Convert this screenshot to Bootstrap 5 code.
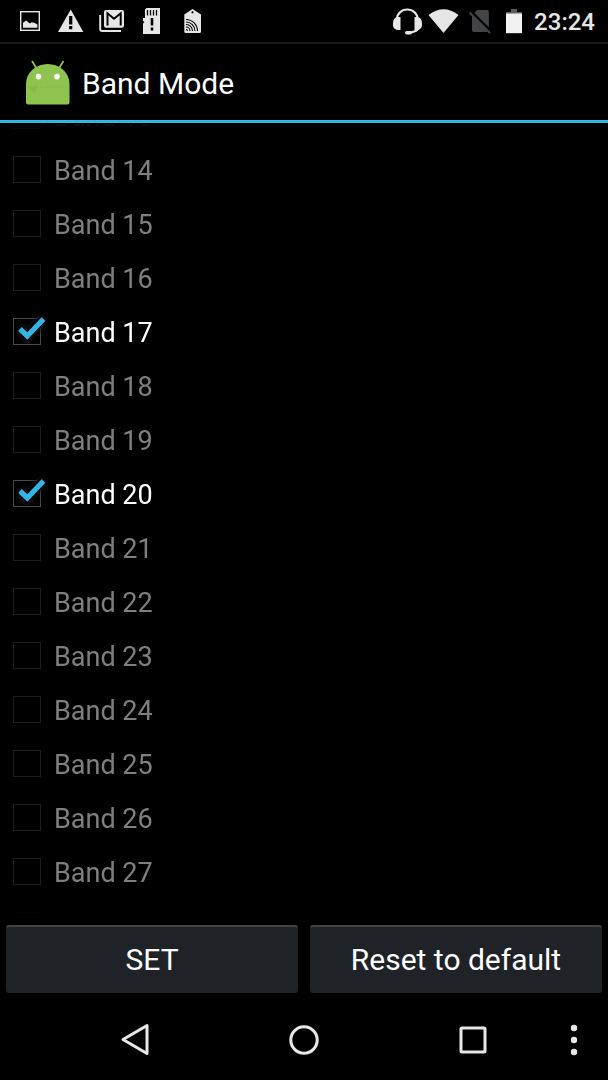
<!DOCTYPE html>
<html lang="en" data-bs-theme="dark">
<head>
<meta charset="utf-8">
<meta name="viewport" content="width=device-width, initial-scale=1">
<title>Band Mode</title>
<link href="https://cdn.jsdelivr.net/npm/bootstrap@5.3.0/dist/css/bootstrap.min.css" rel="stylesheet">
<style>
  body { background: #000; color: #fff; font-family: Roboto, sans-serif; }
  svg { display: block; flex: none; }
  .status-bar { height: 44px; padding: 0 13px 0 14px; border-bottom: 2px solid #191919; color: #e6e6e6; font-size: 24px; font-weight: 500; line-height: 42px; }
  .status-bar span { padding-top: 2px; }
  .status-left { gap: 9px; }
  .title-bar { height: 79px; padding: 0 24px; gap: 10px; border-bottom: 3px solid #33b5e5; }
  .title-bar h1 { font-size: 30px; font-weight: 400; line-height: 40px; padding-top: 4px; }
  .band-window { min-height: 0; -webkit-mask-image: linear-gradient(transparent, #000 20px, #000 calc(100% - 36px), transparent calc(100% - 2px)); mask-image: linear-gradient(transparent, #000 20px, #000 calc(100% - 36px), transparent calc(100% - 2px)); }
  .band-row { height: 54px; padding-left: 8px; flex: none; }
  .band-check { appearance: none; width: 40px; height: 40px; margin: 0; flex: none;
    background: url("data:image/svg+xml,%3Csvg xmlns='http://www.w3.org/2000/svg' viewBox='0 0 40 40'%3E%3Crect x='5.5' y='6.5' width='27' height='26' fill='none' stroke='%231b1e21'/%3E%3C/svg%3E") center / 40px 40px no-repeat; }
  .band-check:checked { background-image: url("data:image/svg+xml,%3Csvg xmlns='http://www.w3.org/2000/svg' viewBox='0 0 40 40'%3E%3Cdefs%3E%3Cfilter id='g' x='-40%25' y='-40%25' width='180%25' height='180%25'%3E%3CfeGaussianBlur stdDeviation='2'/%3E%3C/filter%3E%3C/defs%3E%3Crect x='5.5' y='6.5' width='27' height='26' fill='none' stroke='%23484a4b'/%3E%3Cpath d='M12 17l7 7L35 7' fill='none' stroke='%2315191c' stroke-width='11' filter='url(%23g)'/%3E%3Cpath d='M12 17l7 7L35 7' fill='none' stroke='%23000' stroke-width='8'/%3E%3Cpath d='M12 17l7.300 7L35.500 7' fill='none' stroke='%2333b5e5' stroke-width='5.300'/%3E%3C/svg%3E"); }
  .band-row label { font-size: 27px; line-height: 52px; padding: 2px 0 0 6px; color: #7f7f7f; }
  .band-check:checked + label { color: #fff; }
  .actions { padding: 6px 6px 0; gap: 12px; }
  .action-btn { height: 68px; flex: 1 1 0; padding: 0; font-size: 30px; line-height: 64px; color: #fff; background: #1f2226; border: 0; border-top: 2px solid #424345; border-radius: 3px; }
  .action-btn:hover { background: #2a2e33; color: #fff; border-color: #424345; }
  .system-nav { display: grid; grid-template-columns: 51px 1fr 1fr 1fr 51px; height: 87px; padding-top: 6px; }
  .system-nav button { background: none; border: 0; padding: 0; color: #e8e8e8; }
  .system-nav .overflow-key { width: 34px; }
</style>
</head>
<body>
<div class="d-flex flex-column vh-100 overflow-hidden">
  <header class="status-bar d-flex justify-content-between align-items-center flex-shrink-0">
    <div class="status-left d-flex">
      <svg width="32" height="34" viewBox="14 4 32 34" fill="#e6e6e6" aria-hidden="true"><rect x="20.700" y="11.700" width="18.600" height="18.600" fill="none" stroke="#e6e6e6" stroke-width="1.400"/><path d="M23 27.800v-5l3.200-2.300 3.500 3 2-1.300 3 .7 2.700 1.600v3.300z"/></svg>
      <svg width="32" height="34" viewBox="55 4 32 34" aria-hidden="true"><path d="M70.700 9.500 83.300 32H58z" fill="#e6e6e6"/><path d="M70.700 16v8.500M70.700 26v3.300" stroke="#000" stroke-width="3.200"/></svg>
      <svg width="32" height="34" viewBox="96 4 32 34" fill="none" stroke="#e6e6e6" aria-hidden="true"><path d="M100.200 15v14.300a1.700 1.700 0 0 0 1.700 1.700H121" stroke-width="1.900"/><rect x="104" y="10" width="20" height="17.800" rx="2" fill="#e6e6e6" stroke="none"/><path d="M107.500 25.500V13.300l6.500 5.500 6.700-5.500v12.200" stroke="#000" stroke-width="2"/></svg>
      <svg width="32" height="34" viewBox="137 4 32 34" aria-hidden="true"><path d="M145 9.500 146.500 8H160v26h-17V23.500l1.500-1.500-1.500-1v-3h2z" fill="#e6e6e6"/><path d="M147.500 10v5.500M150.500 10v5.500M153.500 10v5.500M156.500 10v5.500" stroke="#000" stroke-width="1.300"/><path d="M152 18v7.500M152 27.500v3" stroke="#000" stroke-width="2.600"/></svg>
      <svg width="32" height="34" viewBox="178 4 32 34" aria-hidden="true"><path d="M184.300 14.500 192.500 9l8.500 5.500v17a1.500 1.500 0 0 1-1.500 1.500h-13.700a1.500 1.500 0 0 1-1.500-1.500z" fill="#e6e6e6"/><circle cx="192.500" cy="12.300" r="1.100"/><path d="M186 19.500a11.500 11.500 0 0 1 11.500 11.500M186 22a9 9 0 0 1 9 9M186 24.500a6.500 6.500 0 0 1 6.500 6.500M186 27a4 4 0 0 1 4 4M186 29.500a1.500 1.500 0 0 1 1.500 1.500" fill="none" stroke="#000" stroke-width="1.100"/></svg>
    </div>
    <div class="d-flex align-items-center">
      <svg width="36" height="34" viewBox="390 4 36 34" aria-hidden="true"><path d="M397 20v-1a10.300 9.500 0 0 1 20.600 0v1M419 27q-1 5-10.500 5.500" fill="none" stroke="#e6e6e6" stroke-width="2.200"/><path d="M400.500 17v13H398a5 5 0 0 1-5-6q0-7 5-7zM414.500 17v13h2.500a5 5 0 0 0 5-6q0-7-5-7z" fill="#e6e6e6"/><rect x="405" y="31" width="7" height="3.600" rx="1.800" fill="#e6e6e6"/></svg>
      <svg width="36" height="34" viewBox="426 4 36 34" aria-hidden="true"><path d="M428.500 15Q443.500 3.500 458.500 15L443.500 33z" fill="#e6e6e6"/></svg>
      <svg width="36" height="34" viewBox="462 4 36 34" aria-hidden="true"><path d="M472 15.500 477.200 10H487a1.800 1.800 0 0 1 1.800 1.800V30a2 2 0 0 1-2 2H474a2 2 0 0 1-2-2z" fill="#444547"/><path d="M471 11.500 491.500 32" stroke="#000" stroke-width="2.600"/><path d="M469.500 12.500 490 33" stroke="#444547" stroke-width="2"/></svg>
      <svg width="36" height="34" viewBox="498 4 36 34" aria-hidden="true"><path d="M511 9h6v3h5v2h-16v-2h5z" fill="#5b5e60"/><path d="M506 13.500h16v19.700h-16z" fill="#f2f2f2"/></svg>
      <span>23:24</span>
    </div>
  </header>

  <div class="title-bar d-flex align-items-center flex-shrink-0">
    <svg width="48" height="48" viewBox="24 58 48 48" aria-hidden="true"><path d="m32 61 5 8M63.500 61l-5 8" stroke="#8bc34a" stroke-width="1.800"/><path d="M26 84a21.700 20 0 0 1 43.500 0v18.500a2 2 0 0 1-2 2H28a2 2 0 0 1-2-2z" fill="#8fc350"/><circle cx="38.500" cy="76.600" r="2.800" fill="#fff"/><circle cx="57" cy="76.600" r="2.800" fill="#fff"/><path d="M28 86.300h10l-4 6.500zM40 87.200h27" fill="#85b94c" stroke="#85b94c" stroke-width=".6" stroke-dasharray="3 2"/></svg>
    <h1 class="mb-0">Band Mode</h1>
  </div>

  <main class="band-window d-flex flex-column justify-content-center flex-grow-1 overflow-hidden">
    <div class="band-row d-flex align-items-center"><input class="band-check" type="checkbox" id="band13" disabled><label for="band13">Band 13</label></div>
    <div class="band-row d-flex align-items-center"><input class="band-check" type="checkbox" id="band14" disabled><label for="band14">Band 14</label></div>
    <div class="band-row d-flex align-items-center"><input class="band-check" type="checkbox" id="band15" disabled><label for="band15">Band 15</label></div>
    <div class="band-row d-flex align-items-center"><input class="band-check" type="checkbox" id="band16" disabled><label for="band16">Band 16</label></div>
    <div class="band-row d-flex align-items-center"><input class="band-check" type="checkbox" id="band17" checked><label for="band17">Band 17</label></div>
    <div class="band-row d-flex align-items-center"><input class="band-check" type="checkbox" id="band18" disabled><label for="band18">Band 18</label></div>
    <div class="band-row d-flex align-items-center"><input class="band-check" type="checkbox" id="band19" disabled><label for="band19">Band 19</label></div>
    <div class="band-row d-flex align-items-center"><input class="band-check" type="checkbox" id="band20" checked><label for="band20">Band 20</label></div>
    <div class="band-row d-flex align-items-center"><input class="band-check" type="checkbox" id="band21" disabled><label for="band21">Band 21</label></div>
    <div class="band-row d-flex align-items-center"><input class="band-check" type="checkbox" id="band22" disabled><label for="band22">Band 22</label></div>
    <div class="band-row d-flex align-items-center"><input class="band-check" type="checkbox" id="band23" disabled><label for="band23">Band 23</label></div>
    <div class="band-row d-flex align-items-center"><input class="band-check" type="checkbox" id="band24" disabled><label for="band24">Band 24</label></div>
    <div class="band-row d-flex align-items-center"><input class="band-check" type="checkbox" id="band25" disabled><label for="band25">Band 25</label></div>
    <div class="band-row d-flex align-items-center"><input class="band-check" type="checkbox" id="band26" disabled><label for="band26">Band 26</label></div>
    <div class="band-row d-flex align-items-center"><input class="band-check" type="checkbox" id="band27" disabled><label for="band27">Band 27</label></div>
    <div class="band-row d-flex align-items-center"><input class="band-check" type="checkbox" id="band28" disabled><label for="band28">Band 28</label></div>
  </main>

  <div class="actions d-flex flex-shrink-0">
    <button type="button" class="btn action-btn">SET</button>
    <button type="button" class="btn action-btn">Reset to default</button>
  </div>

  <nav class="system-nav flex-shrink-0" aria-label="System">
    <span></span>
    <button type="button" class="d-flex align-items-center justify-content-center" aria-label="Back"><svg width="36" height="36" viewBox="0 0 36 36" fill="none" stroke="currentColor" stroke-width="3" stroke-linejoin="round"><path d="M30 3.500v28L6 17.500z"/></svg></button>
    <button type="button" class="d-flex align-items-center justify-content-center" aria-label="Home"><svg width="36" height="36" viewBox="0 0 36 36" fill="none" stroke="currentColor" stroke-width="3"><circle cx="18" cy="18" r="13.200"/></svg></button>
    <button type="button" class="d-flex align-items-center justify-content-center" aria-label="Recent apps"><svg width="36" height="36" viewBox="0 0 36 36" fill="none" stroke="currentColor" stroke-width="3"><rect x="6" y="6" width="24" height="24" rx="1"/></svg></button>
    <button type="button" class="overflow-key d-flex align-items-center justify-content-center" aria-label="More options"><svg width="34" height="36" viewBox="0 0 34 36" fill="currentColor"><circle cx="17" cy="6" r="3.200"/><circle cx="17" cy="18" r="3.200"/><circle cx="17" cy="30" r="3.200"/></svg></button>
  </nav>
</div>
<script src="https://cdn.jsdelivr.net/npm/bootstrap@5.3.0/dist/js/bootstrap.bundle.min.js"></script>
</body>
</html>
